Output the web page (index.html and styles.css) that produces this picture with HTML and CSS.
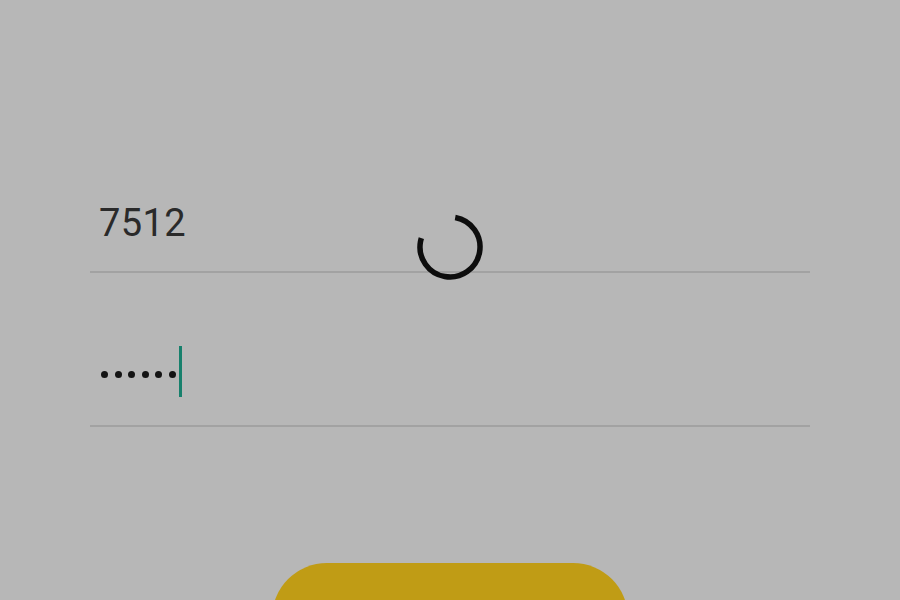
FILE: index.html
```html
<!DOCTYPE html>
<html>
<head>
<meta charset="utf-8">
<link rel="stylesheet" href="styles.css">
</head>
<body>
<div class="screen">
  <form class="form">
    <div class="field field-user"><span class="value">7512</span></div>
    <div class="field field-pass">
      <span class="dots"><i></i><i></i><i></i><i></i><i></i><i></i></span>
      <span class="caret"></span>
    </div>
    <div class="actions"><button type="button" class="btn">Login</button></div>
  </form>
  <svg class="spinner" width="70" height="70" viewBox="0 0 70 70">
    <circle cx="35" cy="35" r="30" fill="none" stroke="#0d0d0d" stroke-width="5.5" stroke-dasharray="145 200" transform="rotate(280 35 35)"/>
  </svg>
</div>
</body>
</html>
```
FILE: styles.css
```css
html, body {
  margin: 0;
  padding: 0;
  background: #b7b7b7;
  height: 100%;
  overflow: hidden;
}
.screen {
  position: relative;
  width: 900px;
  height: 600px;
  font-family: Roboto, "Noto Sans", sans-serif;
}
.form {
  display: flex;
  flex-direction: column;
  padding: 174px 90px 0 90px;
}
.field {
  height: 97px;
  display: flex;
  align-items: center;
  padding-left: 9px;
  border-bottom: 2px solid #a2a2a2;
}
.field-pass {
  margin-top: 54px;
  height: 94px;
  padding-bottom: 4px;
  padding-left: 11px;
}
.value {
  font-size: 38px;
  color: #2a2a2a;
  letter-spacing: 0.4px;
  line-height: 1;
}
.dots {
  display: flex;
  gap: 6.5px;
}
.dots i {
  display: block;
  width: 7px;
  height: 7px;
  border-radius: 50%;
  background: #141414;
}
.caret {
  display: block;
  width: 3px;
  height: 51px;
  margin-left: 3px;
  margin-bottom: 5px;
  background: #17806c;
}
.actions {
  display: flex;
  justify-content: center;
  margin-top: 136px;
}
.btn {
  width: 356px;
  height: 110px;
  border: none;
  border-radius: 56px;
  background: #c09c15;
  color: #2a2a18;
  font-family: Roboto, sans-serif;
  font-size: 40px;
  padding-top: 62px;
}
.spinner {
  position: absolute;
  left: 415px;
  top: 212px;
}
```
